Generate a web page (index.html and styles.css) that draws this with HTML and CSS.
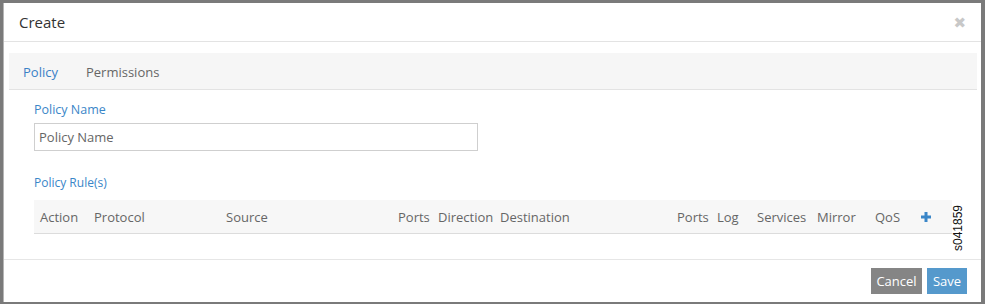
FILE: index.html
```html
<!DOCTYPE html>
<html>
<head>
<meta charset="utf-8">
<link rel="stylesheet" href="styles.css">
</head>
<body>
<div class="dialog">
  <div class="header">
    <span class="title">Create</span>
    <span class="close">&#x2716;</span>
  </div>
  <div class="tabs">
    <span class="tab active">Policy</span>
    <span class="tab">Permissions</span>
  </div>
  <div class="content">
    <div class="label">Policy Name</div>
    <input class="name-input" type="text" placeholder="Policy Name">
    <div class="label rules-label">Policy Rule(s)</div>
    <div class="rules-head">
      <span class="c-action">Action</span>
      <span class="c-protocol">Protocol</span>
      <span class="c-source">Source</span>
      <span class="c-ports">Ports</span>
      <span class="c-direction">Direction</span>
      <span class="c-destination">Destination</span>
      <span class="c-ports2">Ports</span>
      <span class="c-log">Log</span>
      <span class="c-services">Services</span>
      <span class="c-mirror">Mirror</span>
      <span class="c-qos">QoS</span>
      <span class="c-add"><svg width="10" height="10" viewBox="0 0 10 10"><rect x="3.5" y="0" width="3" height="10" fill="#3a86c8"/><rect x="0" y="3.5" width="10" height="3" fill="#3a86c8"/></svg></span>
    </div>
  </div>
  <div class="footer">
    <button class="btn btn-cancel">Cancel</button>
    <button class="btn btn-save">Save</button>
  </div>
  <div class="figure-id">s041859</div>
</div>
</body>
</html>
```
FILE: styles.css
```css
html, body {
  margin: 0;
  padding: 0;
}
body {
  background: #7a7a7a;
  width: 985px;
  height: 304px;
  overflow: hidden;
  font-family: "Open Sans", "Liberation Sans", sans-serif;
}
.dialog {
  position: relative;
  margin: 3px 0 0 3px;
  width: 977px;
  height: 299px;
  background: #fff;
  border-left: 1px solid #b5b5b5;
  display: flex;
  flex-direction: column;
}
.header {
  height: 38px;
  border-bottom: 1px solid #e3e3e3;
  display: flex;
  align-items: center;
  justify-content: space-between;
  padding: 0 15px 0 15px;
}
.title {
  font-size: 15px;
  color: #333;
  margin-top: -1px;
}
.close {
  font-size: 15px;
  color: #c8c8c8;
  font-family: "DejaVu Sans", sans-serif;
  font-weight: bold;
  margin-top: 1px;
}
.tabs {
  margin: 11px 4px 0 5px;
  height: 36px;
  background: #f6f6f6;
  border-bottom: 1px solid #e3e3e3;
  display: flex;
  align-items: center;
  gap: 28px;
  padding-left: 14px;
}
.tab {
  font-size: 13px;
  color: #666;
  margin-top: 1px;
}
.tab.active {
  color: #3a80c6;
}
.content {
  padding: 11px 29px 0 30px;
  display: flex;
  flex-direction: column;
  align-items: flex-start;
}
.label {
  font-size: 12.5px;
  color: #3a86c8;
  height: 18px;
  line-height: 18px;
}
.name-input {
  margin-top: 4px;
  width: 444px;
  height: 28px;
  box-sizing: border-box;
  border: 1px solid #cfcfcf;
  padding: 0 0 0 4px;
  font-family: "Open Sans", "Liberation Sans", sans-serif;
  font-size: 13px;
  color: #666;
  outline: none;
}
.name-input::placeholder {
  color: #666;
}
.rules-label {
  margin-top: 23px;
  font-size: 12px;
}
.rules-head {
  margin-top: 8px;
  width: 918px;
  height: 34px;
  box-sizing: border-box;
  background: #f7f7f7;
  border-bottom: 1px solid #dcdcdc;
  display: grid;
  grid-template-columns: 54px 132px 172px 40px 62px 177px 40px 40px 60px 58px 45px 1fr;
  align-items: center;
  padding-left: 6px;
  font-size: 13px;
  color: #666;
}
.rules-head span {
  white-space: nowrap;
}
.c-add {
  display: flex;
  align-items: center;
  padding-left: 1px;
}
.footer {
  margin-top: auto;
  height: 43px;
  border-top: 1px solid #e6e6e6;
  display: flex;
  justify-content: flex-end;
  align-items: flex-start;
  gap: 5px;
  padding: 8px 14px 0 0;
  box-sizing: border-box;
}
.btn {
  height: 26px;
  border: none;
  color: #fff;
  font-family: "Open Sans", "Liberation Sans", sans-serif;
  font-size: 13px;
  padding: 0;
  cursor: pointer;
}
.btn-cancel {
  width: 51px;
  background: #858585;
}
.btn-save {
  width: 40px;
  background: #5599cc;
}
.figure-id {
  position: absolute;
  left: 948px;
  top: 202px;
  writing-mode: vertical-rl;
  transform: rotate(180deg);
  font-family: "Liberation Sans", Arial, sans-serif;
  font-size: 12px;
  color: #111;
  line-height: 12px;
}
```
